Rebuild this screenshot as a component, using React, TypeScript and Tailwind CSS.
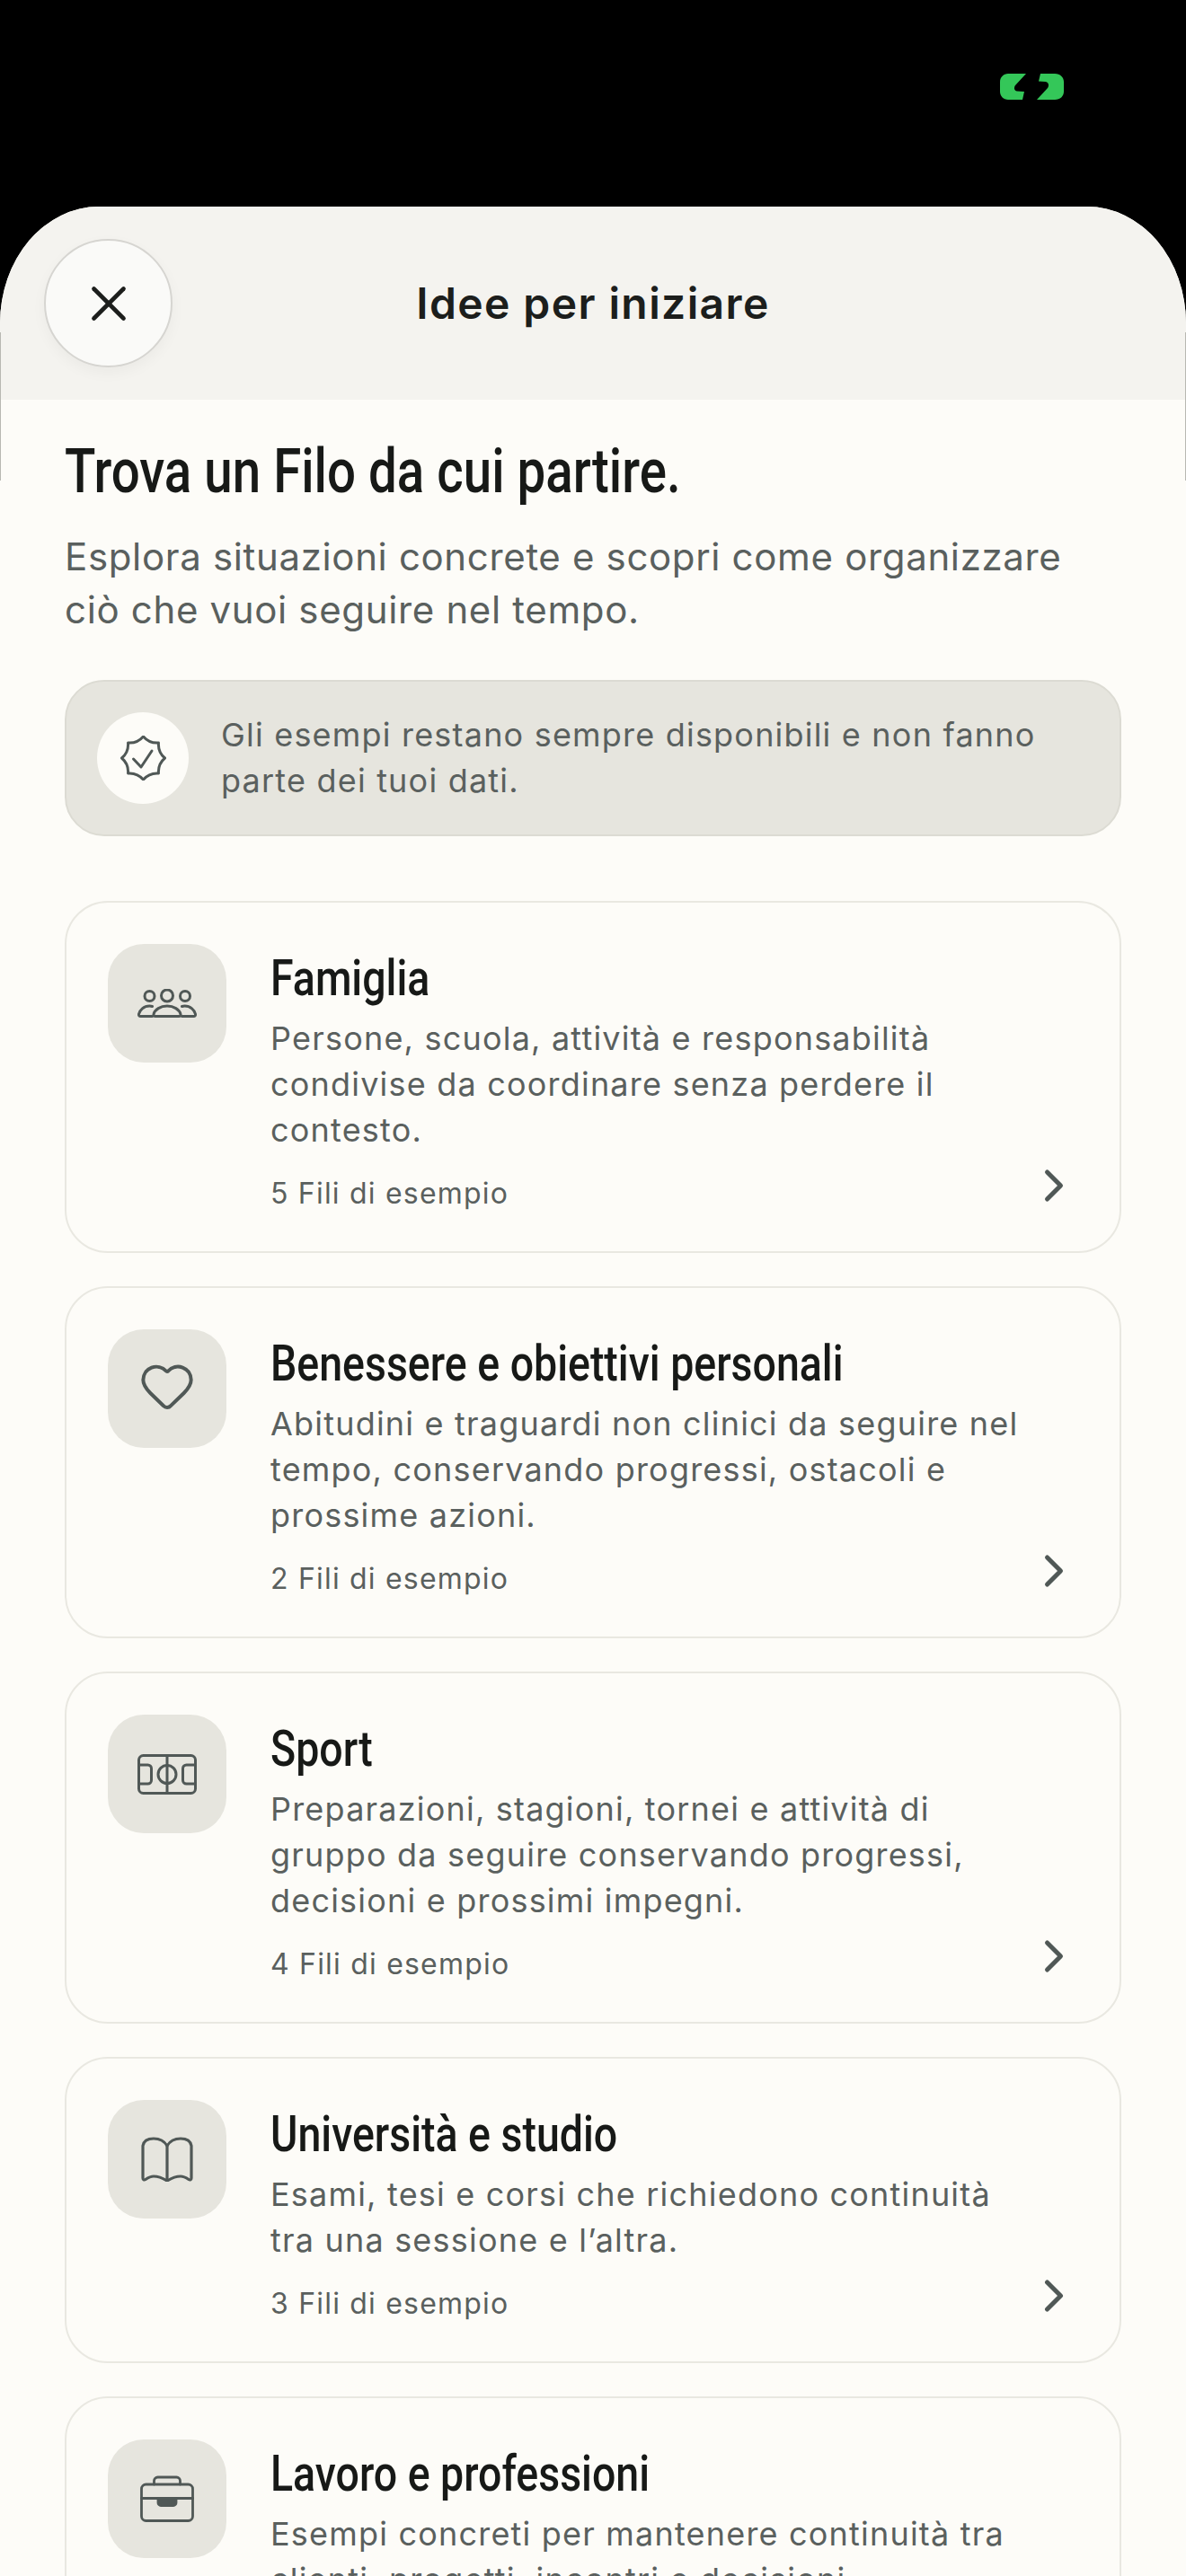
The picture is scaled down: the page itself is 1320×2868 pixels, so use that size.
import { ChevronRight, Heart, X } from "lucide-react";
import type { ReactNode } from "react";

const strokeProps = {
  fill: "none",
  stroke: "currentColor",
  strokeLinecap: "round" as const,
  strokeLinejoin: "round" as const,
};

function PeopleIcon() {
  return (
    <svg viewBox="0 0 66 32" className="h-[32px] w-[66px]" strokeWidth="3" {...strokeProps}>
      <circle cx="13.500" cy="8" r="5.500" />
      <circle cx="33" cy="7.500" r="6.500" />
      <circle cx="53" cy="8" r="5.500" />
      <path d="M16.500 19.500c-1-.3-2-.5-3-.5C7 19 2.500 23.500 1.500 28c-.3 1.500.5 2.500 2 2.500h13" />
      <path d="M20 30.500h26c1.500 0 2.500-1 2-2.500-1.500-5-7.500-9-15-9s-13.500 4-15 9c-.5 1.500.5 2.500 2 2.500z" />
      <path d="M49.500 19.500c1-.3 2-.5 3-.5 6.500 0 11 4.500 12 9 .3 1.500-.5 2.500-2 2.500h-13" />
    </svg>
  );
}

function PitchIcon() {
  return (
    <svg viewBox="0 0 66 45" className="h-[45px] w-[66px]" strokeWidth="3" {...strokeProps}>
      <rect x="1.500" y="1.500" width="63" height="42" rx="5" />
      <path d="M33 1.500v42" />
      <circle cx="33" cy="22.500" r="10" />
      <path d="M1.500 12h10a4 4 0 0 1 4 4v13a4 4 0 0 1-4 4h-10" />
      <path d="M64.500 12h-10a4 4 0 0 0-4 4v13a4 4 0 0 0 4 4h10" />
    </svg>
  );
}

function BookIcon() {
  return (
    <svg viewBox="0 0 58 50" className="h-[50px] w-[58px]" strokeWidth="3.2" {...strokeProps}>
      <path d="M29 10c-3-5-9-8-15-8S3 4 2 10v36c0 2 1.500 2.500 3 1.500 3-2 6-3.500 9-3.500 6 0 10 2 15 5 5-3 9-5 15-5 3 0 6 1.500 9 3.500 1.500 1 3 .5 3-1.500V10c-1-6-6-8-12-8s-12 3-15 8z" />
      <path d="M29 10v38" />
    </svg>
  );
}

function CaseIcon() {
  return (
    <svg viewBox="0 0 60 52" className="h-[52px] w-[60px]" strokeWidth="2.800" {...strokeProps}>
      <rect x="1.500" y="10" width="57" height="40.500" rx="5" />
      <path d="M15.500 10V6a4 4 0 0 1 4-4h21a4 4 0 0 1 4 4v4" />
      <path d="M1.500 25.500h57" />
      <path d="M20 25.500h20v5a3 3 0 0 1-3 3H23a3 3 0 0 1-3-3z" fill="currentColor" />
    </svg>
  );
}

// eight-lobed rosette, concave between the tips
const sealPath = Array.from({ length: 8 }, (_, i) => {
  const tip = ((i * 45 - 90) * Math.PI) / 180;
  const mid = ((i * 45 - 67.5) * Math.PI) / 180;
  const next = ((i * 45 - 45) * Math.PI) / 180;
  const start = i === 0 ? `M${25.5 + 24 * Math.cos(tip)} ${25 + 24 * Math.sin(tip)}` : "";
  return `${start}Q${25.5 + 17.5 * Math.cos(mid)} ${25 + 17.5 * Math.sin(mid)} ${25.5 + 24 * Math.cos(next)} ${25 + 24 * Math.sin(next)}`;
}).join("");

function SealIcon() {
  return (
    <svg viewBox="0 0 51 50" className="h-[50px] w-[51px]" strokeWidth="3" {...strokeProps}>
      <path d={sealPath} />
      <path d="M14.500 26l8.500 9 12-18" />
    </svg>
  );
}

type Category = {
  title: string;
  body: string[];
  count: string;
  icon: ReactNode;
};

const categories: Category[] = [
  {
    title: "Famiglia",
    body: [
      "Persone, scuola, attività e responsabilità",
      "condivise da coordinare senza perdere il",
      "contesto.",
    ],
    count: "5 Fili di esempio",
    icon: <PeopleIcon />,
  },
  {
    title: "Benessere e obiettivi personali",
    body: [
      "Abitudini e traguardi non clinici da seguire nel",
      "tempo, conservando progressi, ostacoli e",
      "prossime azioni.",
    ],
    count: "2 Fili di esempio",
    icon: <Heart className="mb-[6px] h-[64px] w-[64px]" strokeWidth={1.5} />,
  },
  {
    title: "Sport",
    body: [
      "Preparazioni, stagioni, tornei e attività di",
      "gruppo da seguire conservando progressi,",
      "decisioni e prossimi impegni.",
    ],
    count: "4 Fili di esempio",
    icon: <PitchIcon />,
  },
  {
    title: "Università e studio",
    body: [
      "Esami, tesi e corsi che richiedono continuità",
      "tra una sessione e l’altra.",
    ],
    count: "3 Fili di esempio",
    icon: <BookIcon />,
  },
  {
    title: "Lavoro e professioni",
    body: [
      "Esempi concreti per mantenere continuità tra",
      "clienti, progetti, incontri e decisioni.",
    ],
    count: "6 Fili di esempio",
    icon: <CaseIcon />,
  },
];

function CategoryCard({ item }: { item: Category }) {
  return (
    <article className="relative flex shrink-0 gap-[49px] rounded-[48px] border-2 border-[#e9e8e1] px-[46px] pb-[44px] pt-[46px]">
      <div className="flex h-[132px] w-[132px] shrink-0 items-center justify-center rounded-[40px] bg-[#e6e5de] text-[#505856]">
        {item.icon}
      </div>
      <div className="min-w-0 flex-1">
        <h2 className="w-max origin-left scale-x-[0.83] font-['Roboto',sans-serif] text-[56px] font-medium leading-[76px] text-[#171917]">
          {item.title}
        </h2>
        <p className="mt-[4px] text-[36px] leading-[51px] tracking-[1.2px] text-[#5a605e]">
          {item.body.map((line) => (
            <span key={line} className="block whitespace-nowrap">
              {line}
            </span>
          ))}
        </p>
        <p className="mt-[25px] text-[32px] leading-[40px] tracking-[1.2px] text-[#5a605e]">{item.count}</p>
      </div>
      <ChevronRight
        className="absolute bottom-[43px] right-[43px] h-[60px] w-[60px] text-[#505856]"
        strokeWidth={2}
      />
    </article>
  );
}

export default function App() {
  return (
    <div className="h-[2868px] w-[1320px] overflow-hidden bg-black font-['Inter',sans-serif]">
      <div className="flex h-[230px] justify-end pr-[136px] pt-[82px]">
        <svg viewBox="0 0 71 29" className="h-[29px] w-[71px]">
          <path d="M9 0h20L17 13c-2 3-1 6 2 6.500l8 .5-2 9H9c-5 0-9-4-9-9V9c0-5 4-9 9-9z" fill="#34c759" />
          <path d="M45 0h16c6 0 10 4 10 9v11c0 5-4 9-10 9H41l12-13c2-3 1-6-2-7l-8-.5z" fill="#34c759" />
        </svg>
      </div>

      <main className="relative h-[2638px] overflow-hidden rounded-t-[110px_130px] bg-[#fdfcf8]">
        <header className="relative flex h-[215px] items-center justify-center bg-[#f4f3ef]">
          <button className="absolute left-[49px] top-[36px] flex h-[143px] w-[143px] items-center justify-center rounded-full border-2 border-[#d6d5d1] bg-[#fafaf8] text-[#1c1e1c] shadow-[0_6px_16px_rgba(0,0,0,0.04)]">
            <X className="h-[66px] w-[66px]" strokeWidth={1.7} />
          </button>
          <h1 className="text-[48px] font-semibold tracking-[1.4px] text-[#1c1e1c]">Idee per iniziare</h1>
        </header>

        {/* hairline left by the sheet edge */}
        <span className="absolute left-0 top-[140px] h-[165px] w-px bg-[#b8b8b2]" />
        <span className="absolute right-0 top-[140px] h-[165px] w-px bg-[#b8b8b2]" />

        <div className="flex flex-col px-[72px] pt-[40px]">
          <h2 className="w-max origin-left scale-x-[0.83] font-['Roboto',sans-serif] text-[68px] font-medium leading-[80px] text-[#171917]">
            Trova un Filo da cui partire.
          </h2>
          <p className="mt-[25px] text-[42px] leading-[59px] tracking-[0.65px] text-[#5a605e]">
            Esplora situazioni concrete e scopri come organizzare
            <br />
            ciò che vuoi seguire nel tempo.
          </p>

          <section className="mt-[49px] flex h-[174px] items-center gap-[36px] rounded-[44px] border-2 border-[#dcdbd3] bg-[#e6e5de] pl-[34px]">
            <div className="flex h-[102px] w-[102px] items-center justify-center rounded-full bg-[#fdfcf8] text-[#505856]">
              <SealIcon />
            </div>
            <p className="text-[36px] leading-[51px] tracking-[1.2px] text-[#5a605e]">
              Gli esempi restano sempre disponibili e non fanno
              <br />
              parte dei tuoi dati.
            </p>
          </section>

          <div className="mt-[72px] flex flex-col gap-[37px]">
            {categories.map((item) => (
              <CategoryCard key={item.title} item={item} />
            ))}
          </div>
        </div>
      </main>
    </div>
  );
}
